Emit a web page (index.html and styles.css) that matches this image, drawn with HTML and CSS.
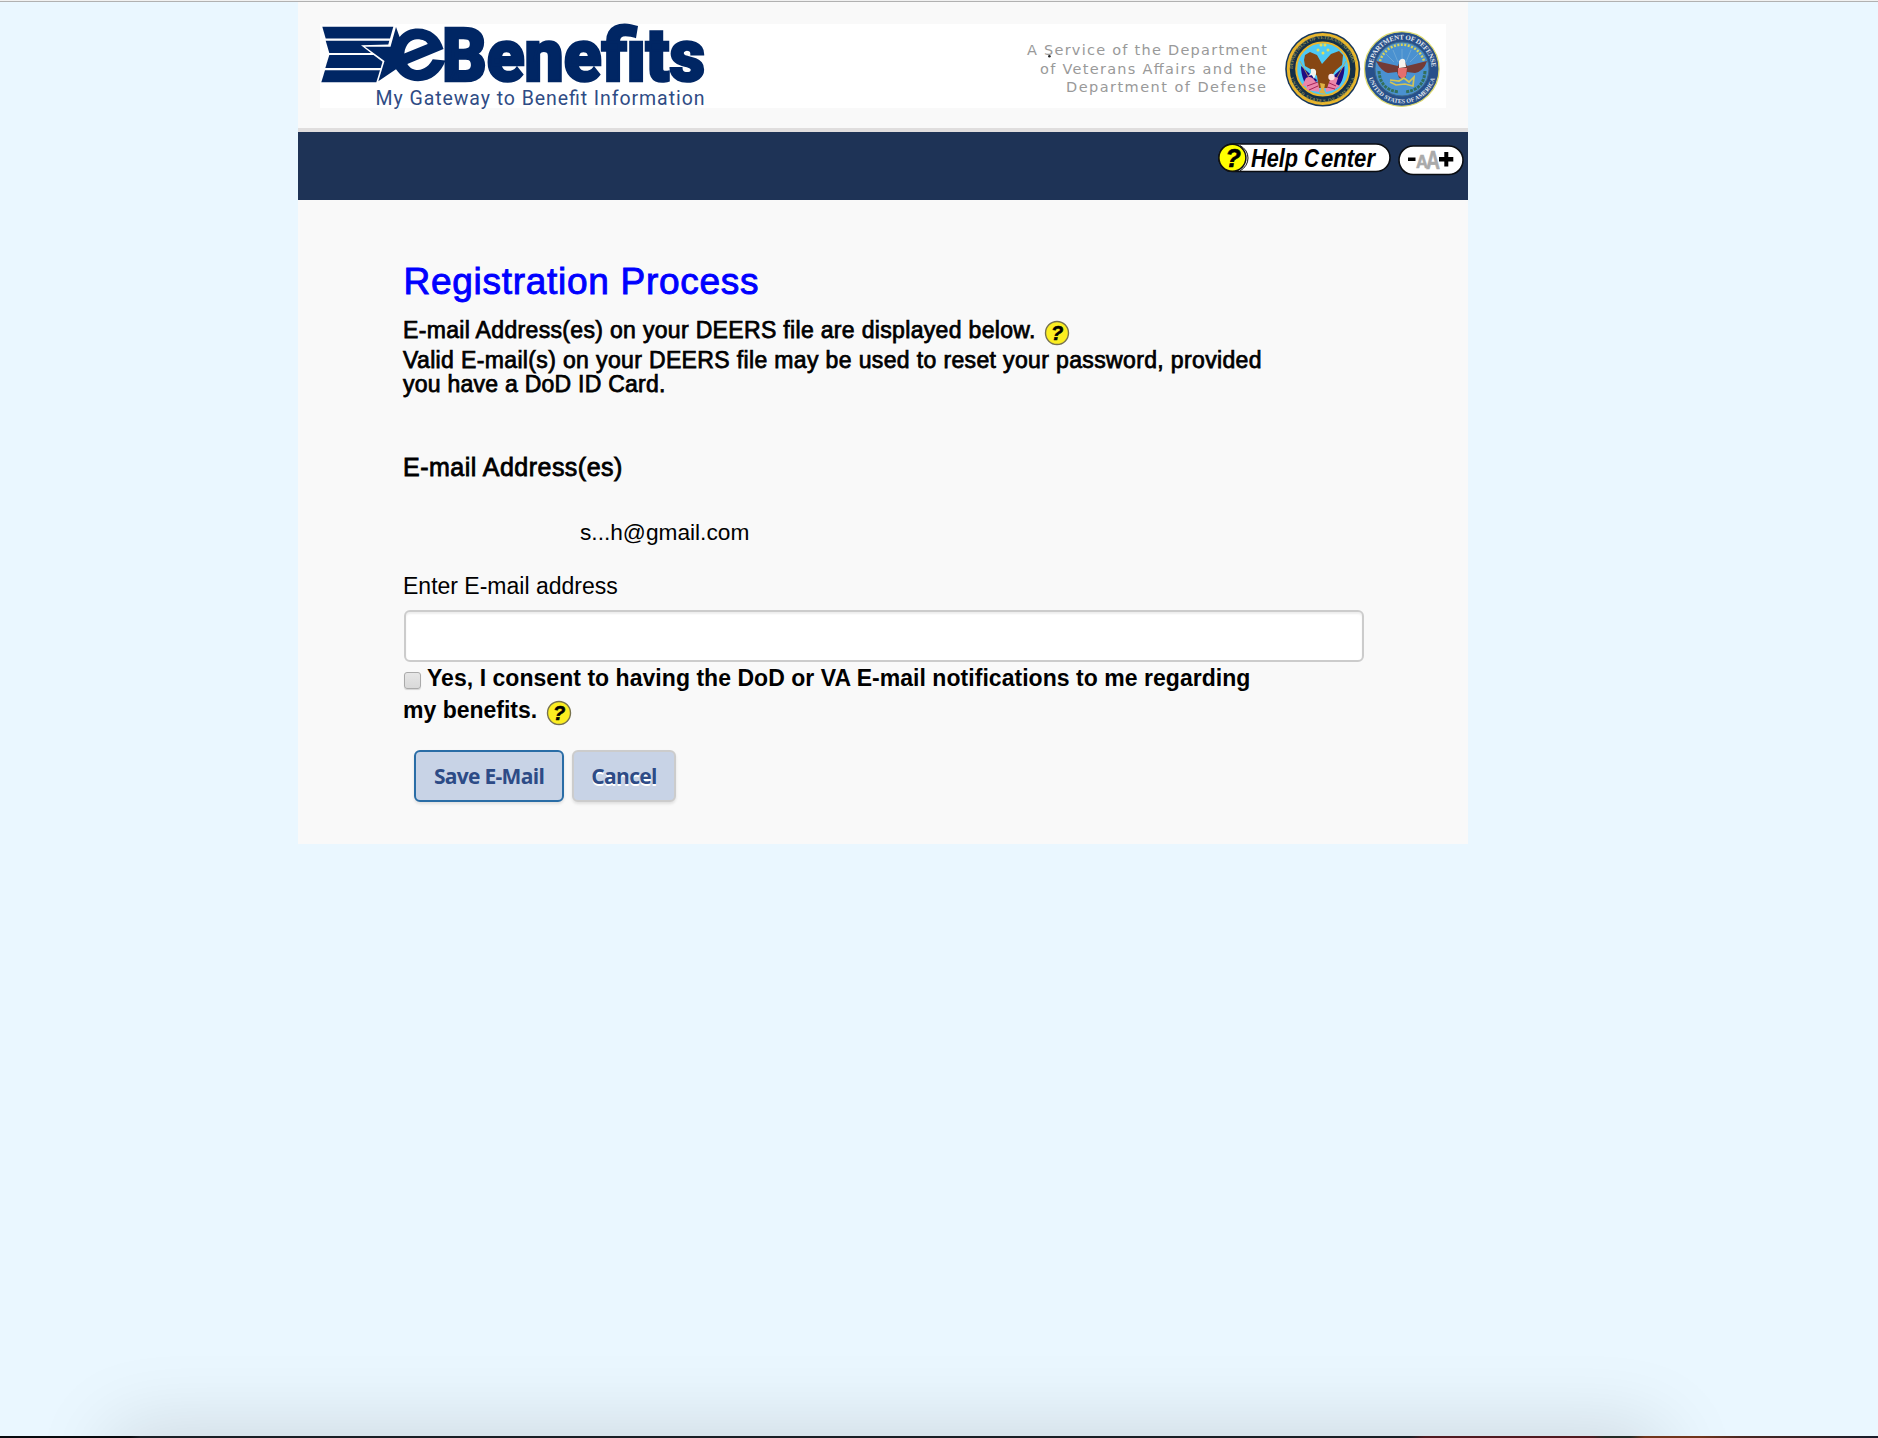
FILE: index.html
```html
<!DOCTYPE html>
<html lang="en">
<head>
<meta charset="utf-8">
<title>eBenefits - Registration Process</title>
<link rel="stylesheet" href="styles.css">
</head>
<body>
<div class="window-edge"></div>
<main class="page">
  <header class="header">
    <div class="banner">
      <svg class="logo" width="390" height="84" viewBox="0 0 390 84" role="img" aria-label="eBenefits">
        <g fill="#002664">
          <path d="M2.3 2.7H73.3L70 14.5H5.7Z"/>
          <path d="M5.7 16.7H69.3L68.3 20.5L41 21.2L51 29H9.3Z"/>
          <path d="M9.3 31H53.5L62.5 37.7L60.7 44H5.3Z"/>
          <path d="M5 46.2H60L56.3 58.3H1.3Z"/>
          <path fill-rule="evenodd" d="M76 3L79.6 13C84 7 91 4.5 98 4.5C110 4.5 120 12 123.5 25L87.3 40C90 44.5 94 46 98 46C104 46 110 41 112.7 35.3L125.5 36.5C121 49 111 57.2 98 57.2C88 57.2 81 52.5 76 45.3L58.3 57.3L64.5 37L45 22.8H70.5ZM84.3 29.5C85.5 20 91 15.3 97 15.3C103 15.3 107 17.5 107.7 20Z"/>
          <text class="brand" x="122" y="57" textLength="263" lengthAdjust="spacingAndGlyphs">Benefits</text>
        </g>
        <text class="tagline" x="55.5" y="81" textLength="329">My Gateway to Benefit Information</text>
      </svg>
      <svg class="service" width="430" height="84" viewBox="0 0 430 84">
        <g class="service-text">
          <text x="11" y="30.5" textLength="240">A Service of the Department</text>
          <text x="24" y="49.5" textLength="226">of Veterans Affairs and the</text>
          <text x="50" y="68" textLength="200">Department of Defense</text>
        </g>
        <circle cx="33.4" cy="32.3" r="1.3" fill="#222"/>
        <defs>
          <path id="va-top" d="M276.7 45A30 30 0 0 1 336.7 45"/>
          <path id="va-bottom" d="M273.2 45A33.5 33.5 0 0 0 340.2 45"/>
          <path id="dod-top" d="M356.5 45A29.5 29.5 0 0 1 415.5 45"/>
          <path id="dod-bottom" d="M351.7 45A34.3 34.3 0 0 0 420.3 45"/>
        </defs>
        <g>
          <circle cx="306.7" cy="45" r="37.5" fill="#17375c"/>
          <circle cx="306.7" cy="45" r="34.4" fill="#143047" stroke="#e9b62c" stroke-width="3"/>
          <circle cx="306.7" cy="45" r="26.5" fill="#4dc9f5" stroke="#e9b62c" stroke-width="2"/>
          <text class="seal-text va"><textPath href="#va-top" textLength="88">DEPARTMENT OF VETERANS AFFAIRS</textPath></text>
          <text class="seal-text va"><textPath href="#va-bottom" startOffset="9" textLength="87">UNITED STATES OF AMERICA</textPath></text>
          <path d="M285 42L301 56L296 66C289 62 285 53 285 42ZM328.500 42L313 56L318 66C325 62 328.500 53 328.500 42Z" fill="#200c82"/>
          <path d="M284 37L300 67M330 37L314 67" stroke="#c4a04a" stroke-width=".8"/>
          <path d="M290 54Q295 51 299 57L304 61L303 68L291 66L290 62L286 62Z" fill="#eb86aa"/>
          <path d="M322 54Q317 51 313 57L309 61L310 68L318 66L324 62L320 60Z" fill="#eb86aa"/>
          <path d="M291 62l11-4M293 66l9-4M311 58l9 4M311 63l8 2" stroke="#a52358"/>
          <path d="M289 31L294 28L301 31L306 40L315 30L323 27L327 31L326 41L320 46L315 53L311 64H303L301 52L296 46L289 42L288 36Z" fill="#864713"/>
          <path d="M295 45q6-1 5 5l-2 5-2-4-4 1 3-3z" fill="#f4f5ee"/>
          <circle cx="315.500" cy="53" r="3.2" fill="#fbe6e9"/>
          <path d="M304 59l5 1-1 6 2 4-7-1 2-4z" fill="#dfb244"/>
          <g fill="#e5df57"><circle cx="305" cy="21" r="1.5"/><circle cx="309" cy="21" r="1.5"/><circle cx="302" cy="26" r="1.5"/><circle cx="307" cy="29" r="1.5"/><circle cx="312" cy="26" r="1.5"/></g>
        </g>
        <g>
          <circle cx="385.800" cy="45" r="37.3" fill="#27508a" stroke="#dfdb70" stroke-width="1.3"/>
          <circle cx="386" cy="45" r="27" fill="#4a91d0" stroke="#416b88"/>
          <text class="seal-text dod"><textPath href="#dod-top" startOffset="1" textLength="90">DEPARTMENT OF DEFENSE</textPath></text>
          <text class="seal-text dod small"><textPath href="#dod-bottom" startOffset="9" textLength="89">UNITED STATES OF AMERICA</textPath></text>
          <path d="M364 37A23 23 0 0 1 408 37" fill="none" stroke="#d8d35b" stroke-width="2.500" stroke-dasharray="2 1.500"/>
          <path d="M386 38V25M382 38L377 26M390 38L395 26M378 38L370 30M394 38L402 30" stroke="#74abd6" stroke-width=".8"/>
          <path d="M363 47Q364 66 383 68M409 47Q408 66 389 68" fill="none" stroke="#34705c" stroke-width="3" stroke-dasharray="3 1"/>
          <path d="M360 37L382 42L384 36H388L391 42L411 37Q408 47 399 49L391 48L389 55L383 54L381 48L372 49Q365 47 360 37Z" fill="#733b36"/>
          <path d="M383 37q3-4 6-1l1 7-7 1z" fill="#f7f4ee"/>
          <path d="M382 44h9l-1 8-4 3-4-4z" fill="#e66e6d"/>
          <path d="M374 56l9 1 5-3 5 4 5-5-1 9-8-2-9 1-6-3" fill="none" stroke="#d4c455" stroke-width="1.700"/>
        </g>
      </svg>
    </div>
  </header>

  <nav class="toolbar">
    <svg width="173" height="30" viewBox="0 0 173 30" role="img" aria-label="Help Center">
      <rect x="1" y="1" width="171" height="27.500" rx="14" fill="#fff" stroke="#0a0d12" stroke-width="1.600"/>
      <path d="M22 2.500Q30 7 30 15Q30 23 22 28" fill="none" stroke="#111" stroke-width="1"/>
      <circle cx="14.400" cy="14.800" r="13.500" fill="#ff0" stroke="#111" stroke-width="1.500"/>
      <text class="help-mark" x="7.500" y="23.500">?</text>
      <g class="help-text"><text x="33" y="23.500" textLength="47" lengthAdjust="spacingAndGlyphs">Help</text><text x="86" y="23.500" textLength="15" lengthAdjust="spacingAndGlyphs">C</text><text x="103" y="23.500" textLength="54" lengthAdjust="spacingAndGlyphs">enter</text></g>
    </svg>
    <svg class="text-size" width="66" height="31" viewBox="0 0 66 31" role="img" aria-label="Text size">
      <rect x="1" y="1" width="64" height="28.500" rx="14.200" fill="#fff" stroke="#0a0d12" stroke-width="1.600"/>
      <path d="M10 12.500h7.500v3.500h-7.500zM41 12h5.300V7h4v5h5v4.500h-5v5h-4v-5H41z" fill="#000"/>
      <g class="size-a"><text x="18" y="23" font-size="18" textLength="12" lengthAdjust="spacingAndGlyphs">A</text><text x="28" y="23.500" font-size="26" textLength="14" lengthAdjust="spacingAndGlyphs">A</text></g>
    </svg>
  </nav>

  <form class="content">
    <h1>Registration Process</h1>
    <p class="lead first">E-mail Address(es) on your DEERS file are displayed below.<svg class="hint" width="26" height="26" viewBox="0 0 26 26"><circle cx="13" cy="13" r="11.500" fill="#fcee21" stroke="#77724f" stroke-width="1.400"/><text x="7" y="20">?</text></svg></p>
    <p class="lead second">Valid E-mail(s) on your DEERS file may be used to reset your password, provided</p>
    <p class="lead third">you have a DoD ID Card.</p>
    <h2>E-mail Address(es)</h2>
    <p class="email">s...h@gmail.com</p>
    <label class="field-label" for="email">Enter E-mail address</label>
    <input class="field" id="email" type="text">
    <div class="consent">
      <div class="consent-line"><span class="checkbox"></span><span class="consent-text">Yes, I consent to having the DoD or VA E-mail notifications to me regarding</span></div>
      <div class="consent-line"><span class="consent-end">my benefits.</span><svg class="hint" width="26" height="26" viewBox="0 0 26 26"><circle cx="13" cy="13" r="11.500" fill="#fcee21" stroke="#77724f" stroke-width="1.400"/><text x="7" y="20">?</text></svg></div>
    </div>
    <div class="actions">
      <button class="button primary" type="button">Save E-Mail</button>
      <button class="button" type="button">Cancel</button>
    </div>
  </form>
</main>
<div class="dock"><div class="dock-shadow"></div></div>
<div class="desktop-strip"></div>
</body>
</html>
```
FILE: styles.css
```css
* { box-sizing: border-box; }
html, body { height: 100%; }
body {
  margin: 0;
  position: relative;
  overflow: hidden;
  background: #eaf7ff;
  color: #000;
  font-family: "Liberation Sans", Arial, sans-serif;
}
.window-edge { height: 2px; background: #f1f1f1; border-bottom: 1px solid #b1b1b1; }
.page { width: 1170px; margin-left: 298px; background: #f9f9f9; }

.header { height: 130px; padding: 22px; border-bottom: 4px solid #e0dede; }
.banner { display: flex; justify-content: space-between; height: 84px; background: #fff; }
.logo { overflow: visible; }
.service { display: block; }
.brand { font: 900 74px Roboto, sans-serif; stroke: #002664; stroke-width: 2.6px; }
.tagline { font: 400 19.5px Roboto, sans-serif; fill: #2f4c85; }
.service-text { font: 14.5px "DejaVu Sans", sans-serif; fill: #999; }
.seal-text { font-family: "Liberation Serif", serif; font-weight: 700; }
.va { font-size: 5px; fill: #8d8c52; }
.dod { font-size: 7px; fill: #e4e9ef; }
.dod.small { font-size: 6px; }

.toolbar { display: flex; gap: 7px; height: 68px; padding: 11px 4px 0 0; justify-content: flex-end; background: #1e3356; }
.text-size { margin-top: 2px; }
.help-mark { font: italic 700 25px "Liberation Sans", sans-serif; stroke: #000; stroke-width: .7px; }
.help-text { font: italic 700 26px "Liberation Sans", sans-serif; }
.size-a { font-family: "Liberation Sans", sans-serif; font-weight: 700; fill: #aaa; stroke: #aaa; stroke-width: .6px; }

.content { height: 644px; padding: 62px 104px 0 105px; }
h1, h2, p { margin: 0; font-weight: 400; white-space: nowrap; }
h1 { font-size: 37px; line-height: 40px; letter-spacing: .72px; text-indent: .5px; color: #00f; -webkit-text-stroke: .9px #00f; }
.lead { height: 24px; font-size: 23px; line-height: 24px; letter-spacing: .33px; -webkit-text-stroke: .75px #000; }
.first { display: flex; height: 30px; margin-top: 16px; }
.second { letter-spacing: .36px; }
.third { letter-spacing: .25px; }
.hint { flex: none; margin: 2px 0 0 9px; -webkit-text-stroke: 0; }
.first .hint { margin-left: 8px; }
.hint text { font: italic 700 20px "Liberation Sans", sans-serif; letter-spacing: 0; stroke: #000; stroke-width: .6px; }
h2 { margin-top: 58px; font-size: 25px; line-height: 26px; letter-spacing: .48px; -webkit-text-stroke: .8px #000; }
.email { margin: 40px 0 0 177px; font-size: 22.7px; line-height: 24px; }
.field-label { display: block; margin-top: 30px; font-size: 23px; line-height: 24px; }
.field {
  display: block;
  width: 960px;
  height: 52px;
  margin: 12px 0 0 1px;
  border: 2px solid #ccc;
  border-radius: 6px;
  background: #fff;
  box-shadow: inset 0 2px 2px rgba(0, 0, 0, .07);
}
.consent { font-size: 23px; font-weight: 700; line-height: 32px; white-space: nowrap; }
.consent-line { display: flex; height: 32px; }
.consent-line .hint { margin-top: 6px; }
.consent-text { letter-spacing: .04px; }
.checkbox {
  width: 17px;
  height: 17px;
  margin: 10px 6px 0 1px;
  border: 1px solid #aaa;
  border-radius: 3px;
  background: linear-gradient(#e6e6e6, #d9d9d9);
  box-shadow: 0 1px 1px rgba(0, 0, 0, .15);
}
.actions { display: flex; gap: 8px; margin: 24px 0 0 11px; }
.button {
  width: 104px;
  height: 52px;
  padding: 0;
  border: 2px solid #ccc;
  border-radius: 6px;
  background: #c8d3e6;
  box-shadow: 0 2px 3px rgba(0, 0, 0, .1);
  color: #2d4b86;
  font: 700 21px "Open Sans", sans-serif;
  letter-spacing: -.7px;
  text-shadow: 0 2px 0 #fff;
  white-space: nowrap;
}
.primary { width: 150px; border-color: #2a6da6; text-shadow: none; }

.dock { position: absolute; left: 0; bottom: 0; width: 100%; height: 140px; overflow: hidden; pointer-events: none; }
.dock-shadow {
  width: 1550px;
  height: 120px;
  margin: 140px 0 0 112px;
  box-shadow: 0 -10px 80px rgba(0, 0, 0, .13);
}
.desktop-strip {
  position: absolute;
  left: 0;
  bottom: 0;
  width: 100%;
  height: 2px;
  background: linear-gradient(90deg, #080a0e 0 130px, #1a1f26 140px 1410px, #501a20 1425px 1590px, #252a25 1605px 1630px, #70351c 1645px 1700px, #4a2822 1740px, #171c2b);
}
```
